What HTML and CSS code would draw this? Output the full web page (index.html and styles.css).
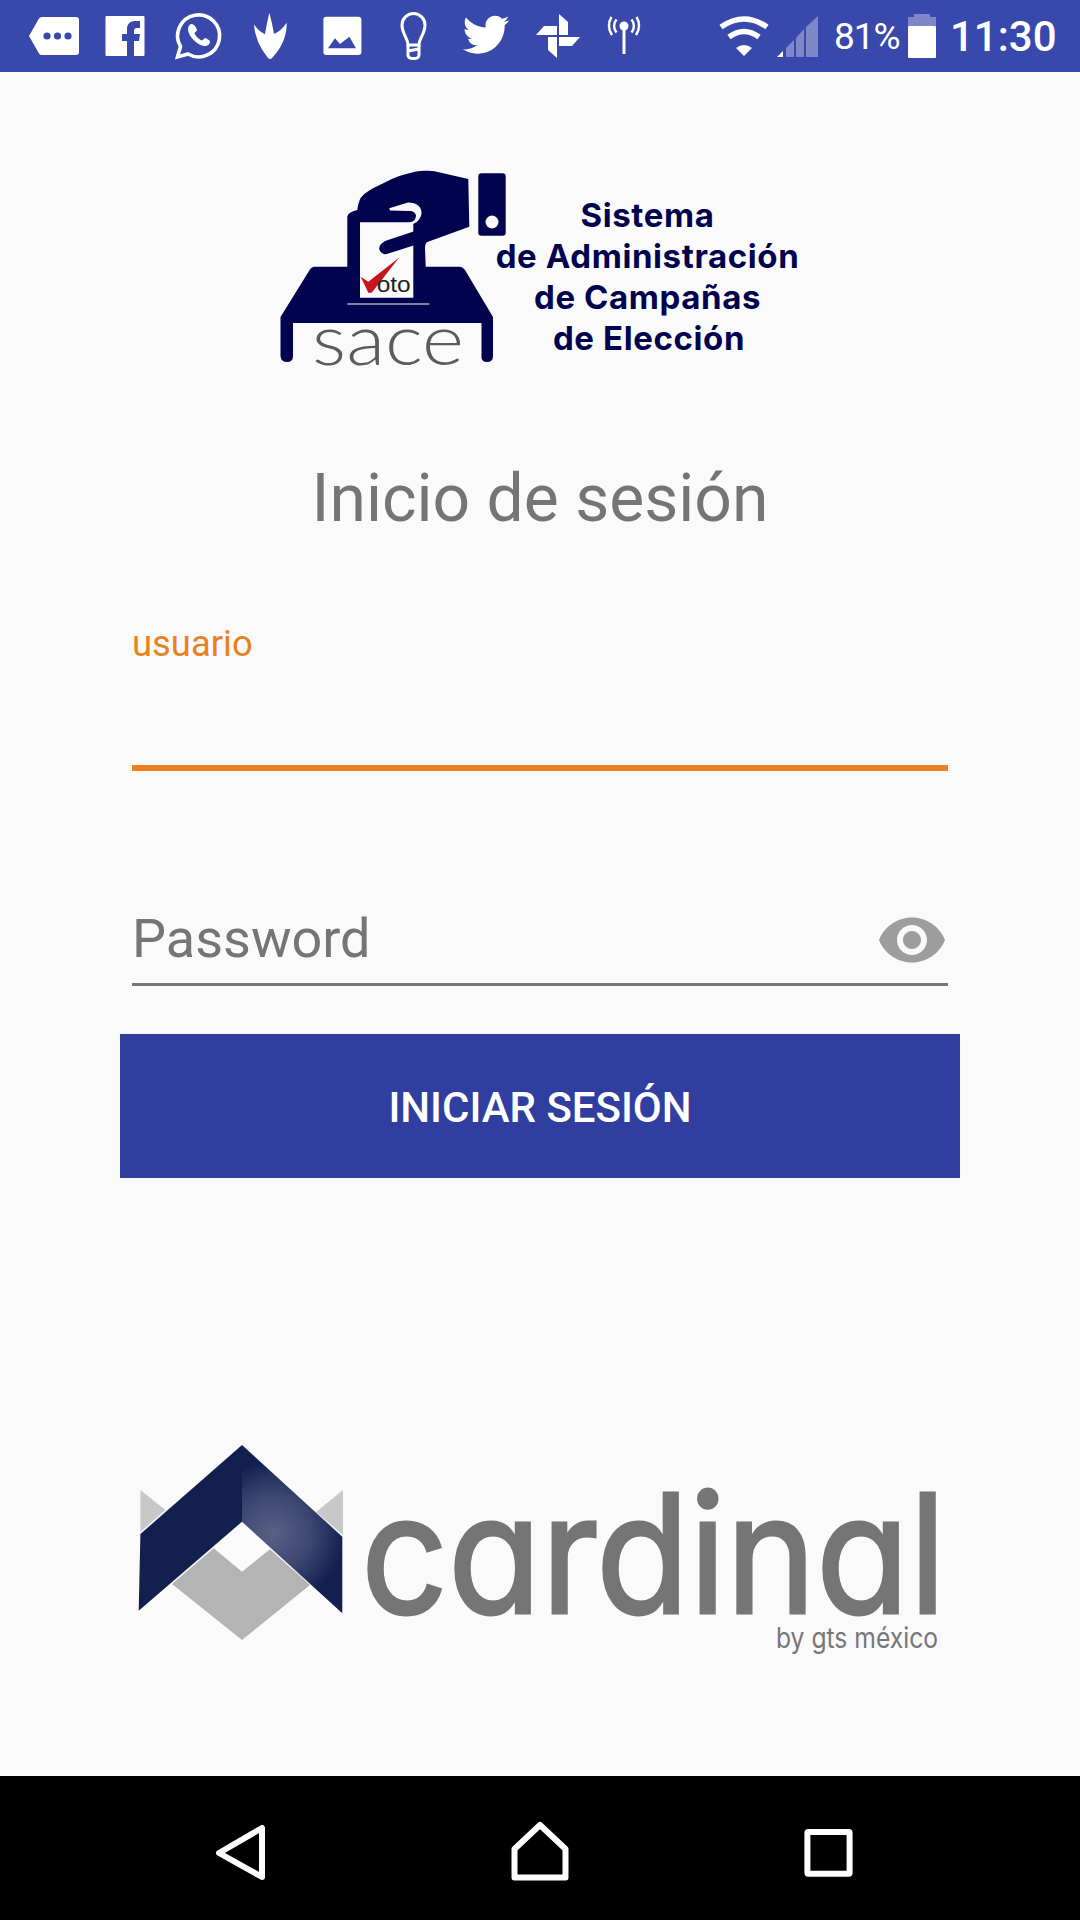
FILE: index.html
```html
<!DOCTYPE html>
<html lang="es">
<head>
<meta charset="UTF-8">
<meta name="viewport" content="width=device-width, initial-scale=1.0">
<title>Inicio de sesión</title>
<link rel="stylesheet" href="styles.css">
</head>
<body>

<div class="status-bar">
  <div class="notif-icons">
    <svg class="icon" viewBox="0 0 48 48"><path class="w" d="M-1 24L9 6.500Q10 5 12 5H46Q49 5 49 8V40Q49 43 46 43H12Q10 43 9 41.500Z"/><circle class="b" cx="17" cy="24" r="3.600"/><circle class="b" cx="27.500" cy="24" r="3.600"/><circle class="b" cx="38" cy="24" r="3.600"/></svg>
    <svg class="icon" viewBox="0 0 48 48"><rect class="w" x="4.500" y="4" width="39" height="40" rx="1"/><path class="b" d="M26 44V29h-5v-7h5v-5c0-5 3-8 8-8h5v7h-3c-2 0-3 1-3 3v3h6l-1 7h-5v15z"/></svg>
    <svg class="icon" viewBox="0 0 48 48"><path class="line" stroke-width="3.600" d="M4.500 45L7.500 34.500A21 21 0 1 1 15 42Z"/><path class="w" d="M18.500 12c-1.500 0-3.500 2-3.500 5 0 7 9 16 16 17 3.500.5 6-2 6-4.500 0-1-3.500-3-5-3.500l-3 2.500c-3-1-6.500-4.500-7.500-7.500l2.500-2.500C24 16.500 21.500 12 18.500 12z"/></svg>
    <svg class="icon" viewBox="0 0 48 48"><path class="w" d="M10 12.300Q14 19 21 22.300Q23 10 25.300 .7Q28 10 30 22Q37 19 42.700 10.700Q43 30 28 46Q26 48 24 46Q11 30 10 12.300Z"/></svg>
    <svg class="icon" viewBox="0 0 48 48"><rect class="w" x="7.400" y="4.700" width="38" height="38.300" rx="3"/><path class="b" d="M12 36.300L19 26.300L24 32L33.400 24.700L40 36.300Z"/></svg>
    <svg class="icon" viewBox="0 0 48 48"><path class="line" stroke-width="3" d="M21 33C21 26 15 22 15 13A11.500 11.500 0 0 1 38 13C38 22 32 26 32 33Z"/><path class="line" stroke-width="3" d="M21 33V43Q21 46.500 26.500 46.500T32 43V33M21 39L32 37"/></svg>
    <svg class="icon" viewBox="0 0 48 48"><path class="w" transform="translate(1.300 -5.200) scale(2.230)" d="M22.460 6c-.77.35-1.600.58-2.460.69.88-.53 1.560-1.370 1.880-2.380-.83.5-1.750.85-2.720 1.050C18.370 4.500 17.260 4 16 4c-2.350 0-4.270 1.920-4.270 4.290 0 .34.04.67.11.98C8.280 9.090 5.110 7.380 3 4.790c-.37.63-.58 1.370-.58 2.150 0 1.490.75 2.810 1.910 3.560-.71 0-1.370-.2-1.950-.5v.03c0 2.080 1.480 3.820 3.440 4.210a4.220 4.220 0 0 1-1.930.07 4.280 4.280 0 0 0 4 2.980 8.521 8.521 0 0 1-5.330 1.840c-.34 0-.68-.02-1.020-.06C3.440 20.290 5.700 21 8.120 21 16 21 20.330 14.460 20.330 8.790c0-.19 0-.37-.01-.56.84-.6 1.560-1.360 2.140-2.230z"/></svg>
    <svg class="icon" viewBox="0 0 48 48"><g transform="translate(28 24)"><path class="w" d="M1 -22L10 -14V-1H1Z"/><path class="w" transform="rotate(90)" d="M1 -22L10 -14V-1H1Z"/><path class="w" transform="rotate(180)" d="M1 -22L10 -14V-1H1Z"/><path class="w" transform="rotate(270)" d="M1 -22L10 -14V-1H1Z"/></g></svg>
    <svg class="icon" viewBox="0 0 48 48"><circle class="w" cx="23" cy="14" r="4.500"/><rect class="w" x="21.500" y="14" width="3" height="28"/><path class="line" stroke-width="2.500" d="M15.500 7.500A10 10 0 0 0 15.500 20.500M30.500 7.500A10 10 0 0 1 30.500 20.500M10.500 5A16 16 0 0 0 11 23M35.500 5A16 16 0 0 1 35 23"/></svg>
  </div>
  <div class="system-icons">
    <svg class="wifi" viewBox="0 0 50 40"><path class="line" stroke-width="5.500" d="M2 11Q25 -5 48 11M10 21Q25 10 40 21"/><path class="w" d="M17 32Q25 26 33 32L25 40Z"/></svg>
    <svg class="signal" viewBox="0 0 41 41"><path class="dim" d="M9 41V32L17 24V41ZM19 41V22L27 13V41ZM29 41V11L41 0V41Z"/><path class="w" d="M0 41L6 35V41Z"/></svg>
    <span class="battery-pct">81%</span>
    <svg class="battery" viewBox="0 0 28 44"><path class="dim" d="M6 0H22V3H28V12H0V3H6Z"/><rect class="w" y="12" width="28" height="32" rx="1"/></svg>
    <span class="clock">11:30</span>
  </div>
</div>

<div class="main">
  <svg class="logo-sace" viewBox="0 0 560 230">
    <path class="navy" d="M54 116.700H87.300V66.700Q88 62 97.300 60C98 54 100 48 101.700 46.700C108 40 116 37 123.300 33.300C134 27 145 24 155 21.700C165 20 172 21 176.700 21.700L208.300 29L209.300 76.700L166.700 92.300Q165 94 165 98.300L165.700 116.700H200Q203 117 205 120L233 167V206Q233 212 227 212T221.500 206V173H33V206Q33 212 27 212T20.500 206V167L49 121Q51 117 54 116.700Z"/>
    <rect class="navy" x="218.300" y="23.300" width="27.400" height="62.400" rx="3"/>
    <circle class="paper" cx="232" cy="72" r="6.500"/>
    <path class="paper" d="M129.300 58.300L148 52.500Q162 53 161.500 64Q160 71 153.300 74V147.700H100V72.300H150Q156 71 156 65.500Q155 61 150 61L130 60.500Z"/>
    <path class="navy" d="M155 81L125 91Q117 96 120 101Q123 106 130 103L155 95Z"/>
    <path class="check" d="M100.700 126.700L108.300 131.700L139 107.700L111.700 142.700H108.300Z"/>
    <text class="voto" x="116.700" y="142.300" textLength="34" lengthAdjust="spacingAndGlyphs">oto</text>
    <rect class="paper" x="87.300" y="153.500" width="82" height="1"/>
    <text class="sace" x="52" y="215" textLength="152" lengthAdjust="spacingAndGlyphs">sace</text>
    <text class="sace-title" x="387.500" y="76.700" text-anchor="middle">Sistema</text>
    <text class="sace-title" x="387.500" y="118.300" text-anchor="middle">de Administración</text>
    <text class="sace-title" x="387.500" y="158.500" text-anchor="middle">de Campañas</text>
    <text class="sace-title" x="389" y="200" text-anchor="middle">de Elección</text>
  </svg>

  <h1 class="title">Inicio de sesión</h1>

  <div class="field-user">
    <div class="field-label">usuario</div>
  </div>

  <div class="field-pass">
    <span class="field-hint">Password</span>
    <svg class="eye" viewBox="0 0 24 24"><path d="M12 4.500C7 4.500 2.730 7.610 1 12c1.730 4.390 6 7.500 11 7.500s9.270-3.110 11-7.500c-1.730-4.390-6-7.500-11-7.500zM12 17c-2.760 0-5-2.240-5-5s2.240-5 5-5 5 2.240 5 5-2.240 5-5 5zm0-8c-1.660 0-3 1.340-3 3s1.340 3 3 3 3-1.340 3-3-1.340-3-3-3z"/></svg>
  </div>

  <button class="login-btn" type="button">INICIAR SESIÓN</button>

  <svg class="logo-cardinal" viewBox="0 0 840 250">
    <defs>
      <radialGradient id="shine" gradientUnits="userSpaceOnUse" cx="153" cy="113" r="72">
        <stop offset="0" stop-color="#5a6184"/>
        <stop offset="0.55" stop-color="#3a4570"/>
        <stop offset="1" stop-color="#131f4e"/>
      </radialGradient>
    </defs>
    <path class="wing" d="M20.400 70L45.500 90L20.400 112ZM223 70V115L196 92Z"/>
    <path class="gem" d="M93.700 128.300L122 151.700L150 129.300L190 165L122 220L52 164Z"/>
    <path class="chev" d="M122 25V101.700L18.700 190.700L20.400 114Z"/>
    <path fill="url(#shine)" d="M122 25L222.300 116.700V193.300L122 101.700Z"/>
    <text class="cardinal" x="241" y="193" textLength="585" lengthAdjust="spacingAndGlyphs">cardinal</text>
    <text class="gts" x="656" y="228" textLength="162" lengthAdjust="spacingAndGlyphs">by gts méxico</text>
  </svg>
</div>

<div class="nav-bar">
  <svg class="nav-icon" viewBox="0 0 72 72"><path d="M15 41L58 16V65Z"/></svg>
  <svg class="nav-icon" viewBox="0 0 72 72"><path d="M36 13L10.500 37V65.500H61.500V37Z"/></svg>
  <svg class="nav-icon" viewBox="0 0 72 72"><rect x="3.400" y="20" width="42.200" height="41.700" rx="1"/></svg>
</div>

</body>
</html>
```

FILE: styles.css
```css
* {
  box-sizing: border-box;
}
html, body {
  margin: 0;
  padding: 0;
}
body {
  width: 1080px;
  height: 1920px;
  display: flex;
  flex-direction: column;
  background-color: #fafafa;
  font-family: Roboto, "Liberation Sans", sans-serif;
  overflow: hidden;
}

/* status bar */
.status-bar {
  height: 72px;
  flex: none;
  display: flex;
  align-items: center;
  justify-content: space-between;
  background-color: #3949ab;
  color: #fff;
  padding: 0 26px 0 30px;
}
.notif-icons {
  display: flex;
  align-items: center;
  gap: 23.4px;
}
.icon {
  width: 48px;
  height: 48px;
  overflow: visible;
}
.w {
  fill: #fff;
}
.b {
  fill: #3949ab;
}
.dim {
  fill: rgba(255, 255, 255, 0.35);
}
.line {
  fill: none;
  stroke: #fff;
}
.system-icons {
  display: flex;
  align-items: center;
}
.wifi {
  width: 50px;
  height: 40px;
  margin-right: 8px;
}
.signal {
  width: 41px;
  height: 41px;
  margin-right: 16px;
}
.battery-pct {
  font-size: 37px;
  width: 64px;
  letter-spacing: -1px;
  margin-right: 10px;
}
.battery {
  width: 28px;
  height: 44px;
  margin-right: 14px;
}
.clock {
  font-size: 42px;
  font-weight: 500;
  width: 104px;
  text-align: right;
}

/* login */
.main {
  flex: 1;
  display: flex;
  flex-direction: column;
  padding: 78px 120px 0;
}
.logo-sace {
  width: 560px;
  height: 230px;
  flex: none;
  align-self: center;
}
.navy {
  fill: #02034f;
}
.paper {
  fill: #fafafa;
}
.check {
  fill: #c4161c;
}
.voto {
  font-family: "Liberation Sans", sans-serif;
  font-size: 22px;
  fill: #222;
}
.sace {
  font-family: Lato, sans-serif;
  font-weight: 300;
  font-size: 71px;
  fill: #5c5c5c;
}
.sace-title {
  font-family: Inter, sans-serif;
  font-weight: 700;
  font-size: 33px;
  letter-spacing: 0.6px;
  fill: #02034f;
}
.title {
  margin: 81px 0 0;
  font-size: 66px;
  line-height: 76px;
  font-weight: 400;
  text-align: center;
  color: #757575;
}
.field-user {
  margin: 83px 12px 0;
  height: 151px;
  border-bottom: 6px solid #e8821e;
}
.field-label {
  font-size: 36.4px;
  line-height: 48px;
  color: #e8821e;
}
.field-pass {
  margin: 132px 12px 0;
  height: 83px;
  padding-bottom: 8px;
  display: flex;
  align-items: center;
  justify-content: space-between;
  border-bottom: 3px solid #757575;
}
.field-hint {
  font-size: 54px;
  line-height: 72px;
  color: #757575;
}
.eye {
  width: 72px;
  height: 72px;
  margin-top: 2px;
  fill: #9e9e9e;
}
.login-btn {
  margin-top: 48px;
  height: 144px;
  flex: none;
  border: none;
  padding: 2px 0 0;
  background-color: #303f9f;
  color: #fff;
  font-family: Roboto, sans-serif;
  font-size: 42px;
  font-weight: 500;
}
.logo-cardinal {
  width: 840px;
  height: 250px;
  flex: none;
  margin-top: 242px;
  overflow: visible;
}
.wing {
  fill: #c8c8c8;
}
.gem {
  fill: #b4b4b4;
}
.chev {
  fill: #131f4e;
}
.cardinal {
  font-family: Inter, sans-serif;
  font-feature-settings: "cv11";
  font-size: 165px;
  stroke: #757575;
  stroke-width: 3;
  fill: #757575;
}
.gts {
  font-family: Inter, sans-serif;
  font-feature-settings: "cv11";
  font-size: 28px;
  fill: #777;
}

/* nav */
.nav-bar {
  height: 144px;
  flex: none;
  display: flex;
  align-items: center;
  justify-content: center;
  gap: 228px;
  background-color: #000;
}
.nav-icon {
  width: 72px;
  height: 72px;
  fill: none;
  stroke: #fff;
  stroke-width: 6;
  stroke-linejoin: round;
}
```
